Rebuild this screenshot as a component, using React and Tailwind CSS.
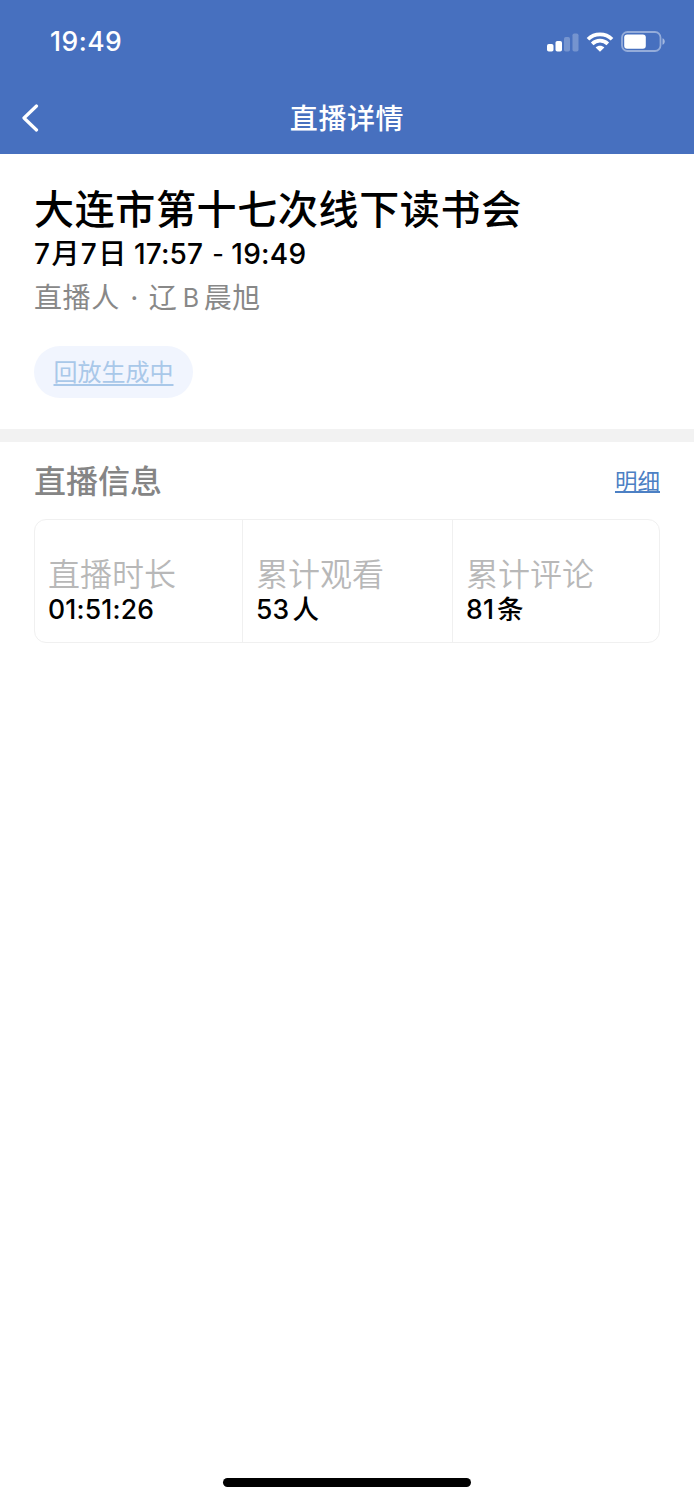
const stats = [
  { label: "直播时长", value: "01:51:26", unit: "" },
  { label: "累计观看", value: "53", unit: "人" },
  { label: "累计评论", value: "81", unit: "条" },
];

function Signal() {
  return (
    <svg className="h-5 w-8" viewBox="0 0 32 20" fill="#fff">
      <rect x="0" y="12" width="6.500" height="7.500" rx="1.800" />
      <rect x="8.500" y="9" width="6.500" height="10.500" rx="1.800" />
      <rect x="17" y="5" width="6" height="14.500" rx="1.800" opacity=".25" />
      <rect x="25.500" y="1.500" width="6" height="18" rx="1.800" opacity=".25" />
    </svg>
  );
}

function Wifi() {
  return (
    <svg className="h-5 w-7" viewBox="0 0 28 20" fill="none" stroke="#fff" strokeWidth="3.700">
      <path d="M2 7.300C8.600.7 19.400.7 26 7.300" />
      <path d="M6.200 11.900c4.400-4.300 11.200-4.300 15.600 0" />
      <path d="M14 19.700l-4.400-4.300c2.500-2.200 6.300-2.200 8.800 0z" fill="#fff" stroke="none" />
    </svg>
  );
}

function Battery() {
  return (
    <svg className="h-[21px] w-11" viewBox="0 0 44 21">
      <rect x="1" y="1" width="38.500" height="19" rx="5.500" fill="none" stroke="#fff" strokeOpacity=".42" strokeWidth="1.800" />
      <rect x="3.200" y="3.400" width="21.600" height="14.400" rx="3" fill="#fff" />
      <path d="M41.500 7.200c3 1 3 5.600 0 6.600z" fill="#fff" opacity=".5" />
    </svg>
  );
}

export default function App() {
  return (
    <div className="flex h-[1500px] w-[694px] flex-col bg-white font-['Inter','Noto_Sans_CJK_SC',sans-serif] text-black">
      <header className="flex h-[154px] flex-col bg-[#4770bf] text-white">
        <div className="flex h-[83px] items-center justify-between pr-[29px] pl-[50px]">
          <span className="pt-px text-[26.5px] font-medium tracking-[0.5px]">19:49</span>
          <div className="flex items-center gap-[7px]">
            <Signal />
            <Wifi />
            <Battery />
          </div>
        </div>
        <div className="grid h-[70px] grid-cols-[60px_1fr_60px] items-center">
          <svg className="ml-[21px] h-7 w-[18px]" viewBox="0 0 18 28" fill="none" stroke="#fff" strokeWidth="3.200" strokeLinecap="round" strokeLinejoin="round">
            <path d="M15.500 2 3 14l12.500 12" />
          </svg>
          <h1 className="pt-0.5 text-center text-[28px] leading-[34px] font-medium tracking-[0.6px]">直播详情</h1>
        </div>
      </header>

      <section className="flex h-[275px] flex-col items-start px-[34px] pt-[30px]">
        <h2 className="text-[40px] leading-[52px] font-medium tracking-[0.65px] whitespace-nowrap">大连市第十七次线下读书会</h2>
        <p className="flex text-[28px] leading-9 font-medium whitespace-nowrap">
          <span className="w-[100px] tracking-[1.4px]">7月7日</span>
          <span className="tracking-[0.15px]">17:57</span>
          <span className="mx-[9px] w-[10px] text-center text-[25px]">-</span>
          <span className="tracking-[0.3px]">19:49</span>
        </p>
        <p className="mt-2 flex text-[28px] leading-9 text-[#888] whitespace-nowrap">
          <span className="tracking-[0.6px]">直播人</span>
          <span className="w-[29px] text-center">·</span>
          <span className="w-[34px]">辽</span>
          <span className="w-[21px] text-[25px]">B</span>
          <span className="tracking-[0.4px]">晨旭</span>
        </p>
        <button className="mt-[30px] flex h-[52px] w-[159px] items-center justify-center rounded-full bg-[#f1f5fe] pt-0.5 text-2xl text-[#a9c8e9] underline decoration-[1.5px] underline-offset-[3px]">
          回放生成中
        </button>
      </section>

      <div className="h-[13px] bg-[#f2f2f2]" />

      <section className="px-[34px] pt-5">
        <div className="flex h-10 items-center justify-between">
          <h3 className="text-[32px] leading-10 font-medium text-[#858585]">直播信息</h3>
          <a className="text-[22.5px] text-[#4c80c4] underline decoration-[1.5px] underline-offset-[1px]">明细</a>
        </div>
        <div className="mt-[17px] grid h-[124px] grid-cols-[208px_210px_1fr] divide-x divide-[#f0f0f0] rounded-xl border border-[#f0f0f0]">
          {stats.map((s) => (
            <div key={s.label} className="flex flex-col pt-[35px] pl-[13px]">
              <span className="text-[32px] leading-10 font-[350] text-[#b8b8b8]">{s.label}</span>
              <span className="-mt-[2px] flex gap-[3px] text-[26.5px] leading-8 font-medium tracking-[0.2px]">
                {s.value}
                {s.unit && <span>{s.unit}</span>}
              </span>
            </div>
          ))}
        </div>
      </section>

      <div className="mt-auto mb-[13px] h-[9px] w-[248px] self-center rounded-full bg-black" />
    </div>
  );
}
